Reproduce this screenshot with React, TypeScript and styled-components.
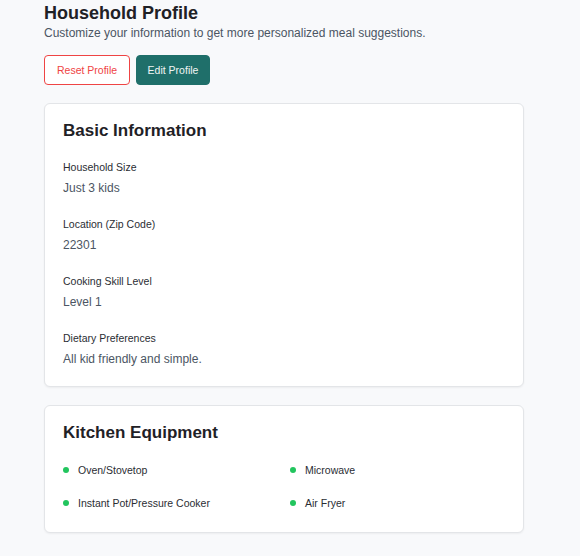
import styled, { createGlobalStyle } from 'styled-components';

const GlobalStyle = createGlobalStyle`
  body {
    margin: 0;
    background: #f8f9fb;
    font-family: "Liberation Sans", Arial, sans-serif;
  }
`;

const basicInfo = [
  { label: 'Household Size', value: 'Just 3 kids' },
  { label: 'Location (Zip Code)', value: '22301' },
  { label: 'Cooking Skill Level', value: 'Level 1' },
  { label: 'Dietary Preferences', value: 'All kid friendly and simple.' },
];

const equipment = ['Oven/Stovetop', 'Microwave', 'Instant Pot/Pressure Cooker', 'Air Fryer'];

function App() {
  return (
    <Page>
      <GlobalStyle />
      <Title>Household Profile</Title>
      <Subtitle>Customize your information to get more personalized meal suggestions.</Subtitle>
      <Actions>
        <OutlineButton>Reset Profile</OutlineButton>
        <PrimaryButton>Edit Profile</PrimaryButton>
      </Actions>

      <Card $bottom={19}>
        <CardTitle>Basic Information</CardTitle>
        <FieldList>
          {basicInfo.map((f) => (
            <Field key={f.label}>
              <Label>{f.label}</Label>
              <Value>{f.value}</Value>
            </Field>
          ))}
        </FieldList>
      </Card>

      <Card $bottom={22}>
        <CardTitle>Kitchen Equipment</CardTitle>
        <EquipGrid>
          {equipment.map((e) => (
            <EquipItem key={e}>
              <Dot />
              {e}
            </EquipItem>
          ))}
        </EquipGrid>
      </Card>
    </Page>
  );
}

export default App;

const Page = styled.div`
  width: 480px;
  margin-left: 44px;
  padding-top: 2px;
  padding-bottom: 24px;
`;

const Title = styled.h1`
  margin: 0;
  font-size: 18px;
  line-height: 22px;
  font-weight: 700;
  color: #1f2126;
`;

const Subtitle = styled.p`
  margin: 1px 0 0;
  font-size: 12px;
  line-height: 16px;
  color: #4b5563;
`;

const Actions = styled.div`
  display: flex;
  gap: 6px;
  margin-top: 14px;
`;

const BaseButton = styled.button`
  height: 30px;
  padding: 0 12px;
  border-radius: 4px;
  font-family: inherit;
  font-size: 10.5px;
  cursor: pointer;
`;

const OutlineButton = styled(BaseButton)`
  background: #fff;
  border: 1px solid #ef4444;
  color: #ef4444;
`;

const PrimaryButton = styled(BaseButton)`
  padding: 0 10.5px;
  background: #1f6f6a;
  border: 1px solid #1f6f6a;
  color: #f1f5f4;
`;

const Card = styled.section<{ $bottom: number }>`
  margin-top: 18px;
  background: #fff;
  border: 1px solid #e3e5e8;
  border-radius: 6px;
  box-shadow: 0 1px 2px rgba(0, 0, 0, 0.05);
  padding: 16px 18px ${(p) => p.$bottom}px;
`;

const CardTitle = styled.h2`
  margin: 0;
  font-size: 17px;
  line-height: 22px;
  font-weight: 700;
  color: #1f2126;
`;

const FieldList = styled.div`
  display: flex;
  flex-direction: column;
  gap: 21px;
  margin-top: 18px;
`;

const Field = styled.div`
  display: flex;
  flex-direction: column;
  gap: 7px;
`;

const Label = styled.span`
  font-size: 10.5px;
  line-height: 14px;
  color: #2a2d33;
`;

const Value = styled.span`
  font-size: 12px;
  line-height: 15px;
  color: #4b5563;
`;

const EquipGrid = styled.div`
  display: grid;
  grid-template-columns: 1fr 1fr;
  row-gap: 19px;
  column-gap: 12px;
  margin-top: 19px;
`;

const EquipItem = styled.div`
  display: flex;
  align-items: center;
  gap: 9px;
  font-size: 10.5px;
  line-height: 14px;
  color: #2a2d33;
`;

const Dot = styled.span`
  width: 6px;
  height: 6px;
  border-radius: 50%;
  background: #22c55e;
  flex-shrink: 0;
`;
